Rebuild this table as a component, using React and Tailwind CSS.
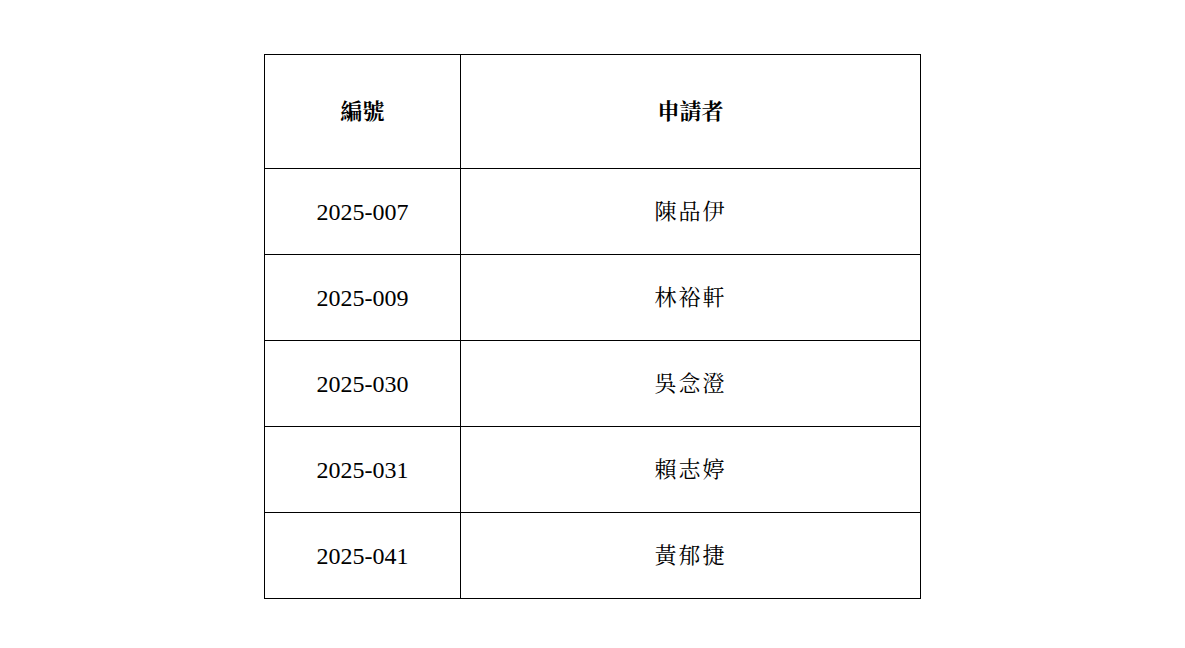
import React from 'react';

const rows = [
    ['2025-007', '陳品伊'],
    ['2025-009', '林裕軒'],
    ['2025-030', '吳念澄'],
    ['2025-031', '賴志婷'],
    ['2025-041', '黃郁捷'],
];

const App = () => {
    return (
        <div
            className="min-h-screen bg-white pt-[54px] flex justify-center text-black text-[24px]"
            style={{ fontFamily: '"Liberation Serif", "Noto Serif CJK TC", "Noto Sans CJK TC", serif' }}
        >
            <div className="self-start grid grid-cols-[196px_460px] border-l border-t border-black">
                <div className="h-[114px] border-r border-b border-black flex items-center justify-center font-bold text-[22px]">編號</div>
                <div className="h-[114px] border-r border-b border-black flex items-center justify-center font-bold text-[22px]">申請者</div>
                {rows.map(([id, name]) => (
                    <React.Fragment key={id}>
                        <div className="h-[86px] border-r border-b border-black flex items-center justify-center">{id}</div>
                        <div className="h-[86px] border-r border-b border-black flex items-center justify-center text-[22px] tracking-[2px]">{name}</div>
                    </React.Fragment>
                ))}
            </div>
        </div>
    );
};

export default App;
